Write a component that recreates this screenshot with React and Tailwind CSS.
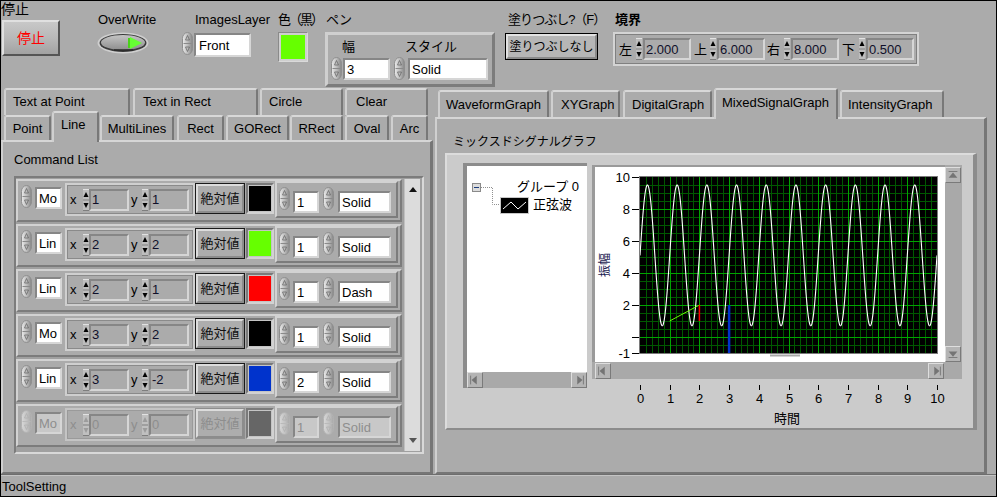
import React from 'react';

const FONT = "font-['Liberation_Sans','Noto_Sans_CJK_JP',sans-serif]";
const SVGFONT = "Liberation Sans, Noto Sans CJK JP, sans-serif";
const SUNK = 'border-2 border-t-[#868686] border-l-[#868686] border-b-[#d6d6d6] border-r-[#d6d6d6]';
const RAISE = 'border-2 border-t-[#d2d2d2] border-l-[#d2d2d2] border-b-[#7c7c7c] border-r-[#7c7c7c]';

function Rocker({ dim }) {
  const id = dim ? 'rkd' : 'rk';
  return (
    <svg width="11" height="23" viewBox="0 0 11 23" className="block shrink-0">
      <defs>
        <linearGradient id={id} x1="0" y1="0" x2="1" y2="0">
          <stop offset="0" stopColor={dim ? '#d8d8d8' : '#ececec'} />
          <stop offset="0.55" stopColor={dim ? '#c2c2c2' : '#b8b8b8'} />
          <stop offset="1" stopColor={dim ? '#a8a8a8' : '#858585'} />
        </linearGradient>
      </defs>
      <rect x="0.5" y="0.5" width="10" height="22" rx="5" ry="6" fill={`url(#${id})`} stroke={dim ? '#b2b2b2' : '#8e8e8e'} />
      <line x1="1.5" y1="11.5" x2="9.5" y2="11.5" stroke={dim ? '#bababa' : '#8a8a8a'} />
      <path d="M5.5 3.5 L3.5 8 L7.5 8 Z" fill="none" stroke={dim ? '#b0b0b0' : '#6a6a6a'} strokeWidth="0.8" />
      <path d="M5.5 19.5 L3.5 15 L7.5 15 Z" fill="none" stroke={dim ? '#b0b0b0' : '#6a6a6a'} strokeWidth="0.8" />
    </svg>
  );
}

function Spin({ dim }) {
  const f = dim ? '#9c9c9c' : '#000';
  return (
    <svg width="6" height="22" viewBox="0 0 6 22" className="block shrink-0">
      <rect x="0" y="0" width="6" height="22" fill={dim ? '#c0c0c0' : '#bdbdbd'} />
      <line x1="0" y1="0.5" x2="6" y2="0.5" stroke="#e2e2e2" />
      <line x1="0" y1="11" x2="6" y2="11" stroke="#7e7e7e" />
      <line x1="0" y1="21.5" x2="6" y2="21.5" stroke="#7e7e7e" />
      <path d="M3 3 L0.5 8 H5.5Z" fill={f} />
      <path d="M3 19 L0.5 14 H5.5Z" fill={f} />
    </svg>
  );
}

function WBox({ cls, dim, children }) {
  return (
    <div className={`${SUNK} ${cls} ${dim ? 'bg-[#c8c8c8] text-[#8e8e8e]' : 'bg-white text-black'} shrink-0 flex items-center pl-[2px] overflow-hidden whitespace-nowrap`}>
      {children}
    </div>
  );
}

function GBox({ cls, dim, children }) {
  return (
    <div className={`${SUNK} ${cls} bg-[#ababab] ${dim ? 'text-[#8e8e8e]' : 'text-[#10102a]'} shrink-0 flex items-center pl-[1px] whitespace-nowrap`}>
      {children}
    </div>
  );
}

function ScrollBtn({ dir }) {
  const paths = {
    up: 'M3 11 L8 5 L13 11 Z',
    down: 'M3 5 L8 11 L13 5 Z',
    left: 'M10 3 L4 8 L10 13 Z',
    right: 'M6 3 L12 8 L6 13 Z',
  };
  const bars = {
    up: 'M3 4 H13',
    down: 'M3 12 H13',
    left: 'M3 3 V13',
    right: 'M13 3 V13',
  };
  return (
    <div className="w-[16px] h-[16px] shrink-0 bg-[#b4b4b4] border border-t-[#dedede] border-l-[#dedede] border-b-[#7a7a7a] border-r-[#7a7a7a] flex items-center justify-center">
      <svg width="14" height="14" viewBox="0 0 16 16" className="block">
        <path d={paths[dir]} fill="#747474" />
        <path d={bars[dir]} stroke="#747474" strokeWidth="1" fill="none" />
      </svg>
    </div>
  );
}

function Toggle() {
  return (
    <svg width="52" height="22" viewBox="0 0 52 22" className="block">
      <defs>
        <linearGradient id="tg" x1="0" y1="0" x2="0" y2="1">
          <stop offset="0" stopColor="#c4c4c4" />
          <stop offset="1" stopColor="#8e8e8e" />
        </linearGradient>
      </defs>
      <ellipse cx="26" cy="11" rx="25.5" ry="10.5" fill="#cfcfcf" />
      <ellipse cx="26" cy="11" rx="23.5" ry="9" fill="#3a3a3a" />
      <ellipse cx="26" cy="10.5" rx="22" ry="7.5" fill="url(#tg)" />
      <line x1="17" y1="18" x2="36" y2="18" stroke="#2a2a2a" strokeWidth="1.5" />
      <rect x="31" y="6" width="2" height="10" fill="#4ad11a" />
      <path d="M33 5 L45 11 L33 17 Z" fill="#66ff33" />
    </svg>
  );
}

function TopBar() {
  return (
    <div className="h-[87px] shrink-0 flex items-start">
      <div className="w-[61px] shrink-0">
        <div className="h-[17px] leading-[17px] text-[14px]">停止</div>
        <div className="mt-[2px] ml-[1px] w-[58px] h-[36px] border-2 border-t-[#e0e0e0] border-l-[#e0e0e0] border-b-[#555555] border-r-[#555555] bg-gradient-to-b from-[#c8c8c8] via-[#b8b8b8] to-[#a2a2a2] flex items-center justify-center text-[#ff0000] text-[14px]">
          停止
        </div>
      </div>
      <div className="ml-[35px] w-[62px] shrink-0 pt-[11px]">
        <div className="h-[16px] leading-[16px] pl-[1px]">OverWrite</div>
        <div className="mt-[4px]">
          <Toggle />
        </div>
      </div>
      <div className="ml-[23px] w-[92px] shrink-0 pt-[11px]">
        <div className="h-[16px] leading-[16px] pl-[13px] whitespace-nowrap">ImagesLayer</div>
        <div className="mt-[4px] flex items-start">
          <Rocker />
          <WBox cls="ml-[1px] mt-[1px] w-[57px] h-[24px] pl-[3px]">Front</WBox>
        </div>
      </div>
      <div className="ml-[4px] w-[46px] shrink-0 pt-[11px]">
        <div className="h-[16px] leading-[16px] tracking-[-2px] whitespace-nowrap">色（黒）</div>
        <div className="mt-[4px] w-[30px] h-[30px] border border-t-[#8a8a8a] border-l-[#8a8a8a] border-b-[#dadada] border-r-[#dadada] bg-[#cfcfcf] p-[2px]">
          <div className="w-full h-full bg-[#66ff00]" />
        </div>
      </div>
      <div className="ml-[1px] w-[170px] shrink-0 pt-[11px]">
        <div className="h-[16px] leading-[16px] pl-[1px]">ペン</div>
        <div className="mt-[4px] w-[170px] h-[55px] border-[3px] border-t-[#cfcfcf] border-l-[#cfcfcf] border-b-[#7c7c7c] border-r-[#7c7c7c]">
          <div className="flex h-[16px] mt-[4px] leading-[16px]">
            <div className="pl-[14px] w-[77px]">幅</div>
            <div>スタイル</div>
          </div>
          <div className="flex items-start mt-[2px]">
            <div className="ml-[3px]">
              <Rocker />
            </div>
            <WBox cls="ml-[1px] mt-[1px] w-[47px] h-[22px]">3</WBox>
            <div className="ml-[4px]">
              <Rocker />
            </div>
            <WBox cls="ml-[3px] mt-[1px] w-[80px] h-[22px]">Solid</WBox>
          </div>
        </div>
      </div>
      <div className="ml-[10px] w-[96px] shrink-0 pt-[11px]">
        <div className="h-[16px] leading-[16px] pl-[3px] whitespace-nowrap tracking-[-1px]">塗りつぶし?（F）</div>
        <div className="mt-[5px] w-[93px] h-[27px] border border-black">
          <div className="w-full h-full border-2 border-t-[#e2e2e2] border-l-[#e2e2e2] border-b-[#8a8a8a] border-r-[#8a8a8a] bg-[#b6b6b6] flex items-center justify-center text-[12px] whitespace-nowrap">
            塗りつぶしなし
          </div>
        </div>
      </div>
      <div className="ml-[12px] w-[306px] shrink-0 pt-[11px]">
        <div className="h-[16px] leading-[16px] pl-[2px] font-bold">境界</div>
        <div className="mt-[4px] w-[306px] h-[34px] border-2 border-[#d4d4d4] shadow-[inset_0_0_0_1px_#808080] flex items-center">
          <div className="ml-[4px] w-[16px]">左</div>
          <div className="ml-[1px]">
            <Spin />
          </div>
          <GBox cls="ml-[1px] w-[48px] h-[22px]">2.000</GBox>
          <div className="ml-[3px] w-[15px]">上</div>
          <div className="ml-[1px]">
            <Spin />
          </div>
          <GBox cls="ml-[1px] w-[48px] h-[22px]">6.000</GBox>
          <div className="ml-[2px] w-[16px]">右</div>
          <div className="ml-[1px]">
            <Spin />
          </div>
          <GBox cls="ml-[1px] w-[48px] h-[22px]">8.000</GBox>
          <div className="ml-[3px] w-[16px]">下</div>
          <div className="ml-[1px]">
            <Spin />
          </div>
          <GBox cls="ml-[1px] w-[48px] h-[22px]">0.500</GBox>
        </div>
      </div>
    </div>
  );
}

const TAB = 'shrink-0 bg-[#ababab] border-t-2 border-l-2 border-r-2 border-t-[#d8d8d8] border-l-[#d0d0d0] border-r-[#787878] rounded-t-[3px] flex items-center whitespace-nowrap';

function CmdRow({ cmd, x, y, color, w, st, dim }) {
  const tc = dim ? 'text-[#8e8e8e]' : 'text-black';
  return (
    <div className={`h-[43px] shrink-0 flex items-start ${RAISE} bg-[#ababab]`}>
      <div className="ml-[3px] mt-[4px]">
        <Rocker dim={dim} />
      </div>
      <WBox cls="ml-[3px] mt-[6px] w-[27px] h-[22px]" dim={dim}>
        {cmd}
      </WBox>
      <div className={`ml-[3px] mt-[2px] w-[130px] h-[33px] shrink-0 border-2 ${dim ? 'border-[#c4c4c4] shadow-[inset_0_0_0_1px_#9a9a9a]' : 'border-[#cfcfcf] shadow-[inset_0_0_0_1px_#8a8a8a]'} flex items-center`}>
        <div className={`w-[13px] pl-[3px] ${tc}`}>x</div>
        <div className="ml-[3px]">
          <Spin dim={dim} />
        </div>
        <GBox cls="w-[40px] h-[22px]" dim={dim}>
          {x}
        </GBox>
        <div className={`w-[13px] pl-[2px] ${tc}`}>y</div>
        <Spin dim={dim} />
        <GBox cls="ml-[1px] w-[40px] h-[22px]" dim={dim}>
          {y}
        </GBox>
      </div>
      <div className={`mt-[2px] w-[50px] h-[31px] shrink-0 border ${dim ? 'border-[#8e8e8e]' : 'border-[#1a1a1a]'}`}>
        <div className={`w-full h-full border-2 border-t-[#dcdcdc] border-l-[#dcdcdc] border-b-[#8c8c8c] border-r-[#8c8c8c] bg-[#adadad] flex items-center justify-center ${dim ? 'text-[#8e8e8e]' : 'text-[#111]'}`}>
          絶対値
        </div>
      </div>
      <div className="ml-[1px] mt-[2px] w-[28px] h-[31px] shrink-0 border-2 border-t-[#7a7a7a] border-l-[#7a7a7a] border-b-[#d2d2d2] border-r-[#d2d2d2] p-[1px] bg-[#c4c4c4]">
        <div className={`w-full h-full ${color}`} />
      </div>
      <div className={`ml-[1px] w-[123px] h-[37px] shrink-0 ${RAISE} flex items-start`}>
        <div className="ml-[2px] mt-[4px]">
          <Rocker dim={dim} />
        </div>
        <WBox cls="ml-[3px] mt-[8px] w-[26px] h-[22px]" dim={dim}>
          {w}
        </WBox>
        <div className="ml-[4px] mt-[4px]">
          <Rocker dim={dim} />
        </div>
        <WBox cls="ml-[4px] mt-[8px] w-[53px] h-[22px]" dim={dim}>
          {st}
        </WBox>
      </div>
    </div>
  );
}

function LeftTab() {
  const rows = [
    { cmd: 'Mo', x: '1', y: '1', color: 'bg-black', w: '1', st: 'Solid' },
    { cmd: 'Lin', x: '2', y: '2', color: 'bg-[#66ff00]', w: '1', st: 'Solid' },
    { cmd: 'Lin', x: '2', y: '1', color: 'bg-[#ff0000]', w: '1', st: 'Dash' },
    { cmd: 'Mo', x: '3', y: '2', color: 'bg-black', w: '1', st: 'Solid' },
    { cmd: 'Lin', x: '3', y: '-2', color: 'bg-[#0033cc]', w: '2', st: 'Solid' },
    { cmd: 'Mo', x: '0', y: '0', color: 'bg-[#666666]', w: '1', st: 'Solid', dim: true },
  ];
  return (
    <div className="w-[432px] shrink-0 flex flex-col">
      <div className="h-[27px] flex items-start pl-[3px] shrink-0">
        <div className={`${TAB} w-[126px] h-[27px] pl-[7px] pb-[2px]`}>Text at Point</div>
        <div className={`${TAB} ml-[3px] w-[125px] h-[27px] pl-[8px] pb-[2px]`}>Text in Rect</div>
        <div className={`${TAB} ml-[2px] w-[83px] h-[27px] pl-[7px] pb-[2px]`}>Circle</div>
        <div className={`${TAB} ml-[2px] w-[83px] h-[27px] pl-[9px] pb-[2px]`}>Clear</div>
      </div>
      <div className="h-[25px] flex items-start pl-[3px] shrink-0">
        <div className={`${TAB} w-[47px] h-[25px] justify-center`}>Point</div>
        <div className={`${TAB} relative z-10 -mt-[4px] ml-[1px] w-[47px] h-[31px] pl-[7px] pb-[6px]`}>Line</div>
        <div className={`${TAB} ml-[1px] w-[74px] h-[25px] justify-center`}>MultiLines</div>
        <div className={`${TAB} ml-[3px] w-[47px] h-[25px] justify-center`}>Rect</div>
        <div className={`${TAB} ml-[2px] w-[63px] h-[25px] justify-center`}>GORect</div>
        <div className={`${TAB} ml-[1px] w-[53px] h-[25px] justify-center`}>RRect</div>
        <div className={`${TAB} ml-[2px] w-[44px] h-[25px] justify-center`}>Oval</div>
        <div className={`${TAB} ml-[2px] w-[37px] h-[25px] justify-center`}>Arc</div>
      </div>
      <div className="flex-1 border-t-2 border-l-2 border-r-[3px] border-b-2 border-t-[#d6d6d6] border-l-[#d0d0d0] border-r-[#767676] border-b-[#767676] flex flex-col">
        <div className="ml-[11px] mt-[10px] h-[15px] leading-[15px]">Command List</div>
        <div className="ml-[11px] mt-[9px] w-[410px] h-[278px] border-2 border-t-[#7c7c7c] border-l-[#7c7c7c] border-b-[#d8d8d8] border-r-[#d8d8d8] bg-[#a0a0a0] flex items-start">
          <div className="w-[386px] pt-[1px] flex flex-col gap-[2px]">
            {rows.map((r, i) => (
              <CmdRow key={i} {...r} />
            ))}
          </div>
          <div className="ml-[2px] mt-[1px] w-[16px] h-[272px] bg-[#dcdcdc] border-l border-[#c0c0c0] flex flex-col items-center justify-between py-[8px]">
            <svg width="8" height="5" viewBox="0 0 8 5" className="block">
              <path d="M4 0 L8 5 H0Z" fill="#111" />
            </svg>
            <svg width="8" height="5" viewBox="0 0 8 5" className="block">
              <path d="M0 0 H8 L4 5Z" fill="#555" />
            </svg>
          </div>
        </div>
      </div>
    </div>
  );
}

function PlotSvg() {
  const ox = 45;
  const oy = 10;
  const W = 297;
  const H = 176;
  const X = (t) => ox + t * 29.7;
  const Y = (v) => oy + (10 - v) * 16;
  const minor = [];
  const major = [];
  for (let i = 1; i < 50; i++) {
    const px = Math.round(X(i / 5)) + 0.5;
    const el = <line key={'v' + i} x1={px} y1={oy} x2={px} y2={oy + H} />;
    if (i % 5 === 0) major.push(el);
    else minor.push(el);
  }
  for (let j = 1; j < 22; j++) {
    const v = -1 + j / 2;
    const py = Math.round(Y(v)) + 0.5;
    const el = <line key={'h' + j} x1={ox} y1={py} x2={ox + W} y2={py} />;
    if (v % 2 === 0) major.push(el);
    else minor.push(el);
  }
  const pts = [];
  for (let k = 0; k <= 2000; k++) {
    const t = k / 200;
    pts.push(`${X(t).toFixed(2)},${Y(5.1 + 4.4 * Math.sin(2 * Math.PI * t)).toFixed(2)}`);
  }
  const ticks = [10, 8, 6, 4, 2, 0, -1];
  return (
    <svg width="350" height="195" viewBox="0 0 350 195" className="block" fontFamily={SVGFONT} fontSize="13">
      <defs>
        <clipPath id="pc">
          <rect x={ox} y={oy} width={W} height={H} />
        </clipPath>
      </defs>
      <rect x={ox} y={oy} width={W} height={H} fill="#000" />
      <g stroke="#005800" strokeWidth="1" shapeRendering="crispEdges">{minor}</g>
      <g stroke="#00a400" strokeWidth="1" shapeRendering="crispEdges">{major}</g>
      <g clipPath="url(#pc)">
        <polyline points={pts.join(' ')} fill="none" stroke="#ffffff" strokeWidth="1.1" />
        <line x1={X(1)} y1={Y(1)} x2={X(2)} y2={Y(2)} stroke="#66ff00" strokeWidth="1" />
        <line x1={X(2)} y1={Y(2)} x2={X(2)} y2={Y(1)} stroke="#ff0000" strokeWidth="1.5" />
        <line x1={X(3)} y1={Y(2)} x2={X(3)} y2={Y(-2)} stroke="#0033cc" strokeWidth="2.5" />
      </g>
      <rect x={ox - 0.5} y={oy - 0.5} width={W + 1} height={H + 1} fill="none" stroke="#7a7a7a" />
      {ticks.map((v) => (
        <g key={v}>
          <line x1="37" y1={Math.round(Y(v)) + 0.5} x2="44" y2={Math.round(Y(v)) + 0.5} stroke="#000" shapeRendering="crispEdges" />
          {v !== 0 && (
            <text x="35" y={Y(v) + 4.5} textAnchor="end" fill="#000">
              {v}
            </text>
          )}
        </g>
      ))}
      <text x="0" y="0" transform="translate(14 98) rotate(-90)" textAnchor="middle" fill="#1a1a50" fontSize="12">
        振幅
      </text>
      <line x1="175" y1="188.5" x2="205" y2="188.5" stroke="#a8a8a8" strokeWidth="2" />
    </svg>
  );
}

function XAxisSvg() {
  const xs = [0, 1, 2, 3, 4, 5, 6, 7, 8, 9, 10];
  return (
    <svg width="370" height="49" viewBox="0 0 370 49" className="block" fontFamily={SVGFONT} fontSize="13">
      {xs.map((i) => {
        const x = Math.round(48 + i * 29.7) + 0.5;
        return (
          <g key={i}>
            <line x1={x} y1="6" x2={x} y2="11" stroke="#000" shapeRendering="crispEdges" />
            <text x={x} y="24" textAnchor="middle" fill="#000">
              {i}
            </text>
          </g>
        );
      })}
      <text x="195" y="44" textAnchor="middle" fill="#000">
        時間
      </text>
    </svg>
  );
}

function Legend() {
  return (
    <div className="mt-[8px] ml-[16px] w-[124px] h-[225px] shrink-0 border-l-4 border-t-[3px] border-[#8c8c8c] bg-white flex flex-col">
      <div className="relative flex-1">
        <svg width="40" height="40" viewBox="0 0 40 40" className="absolute left-[0px] top-[0px]">
          <path d="M14 21.5 H25.5 V38.5 H33" fill="none" stroke="#909090" strokeDasharray="1 1" />
        </svg>
        <div className="absolute left-[5px] top-[17px] w-[9px] h-[9px] border border-[#8a8a8a] bg-[#dcdcdc] flex items-center justify-center">
          <div className="w-[5px] h-[1px] bg-[#1c3c7c]" />
        </div>
        <div className="absolute left-[50px] top-[13px] text-[13px] leading-[15px] whitespace-nowrap">グループ 0</div>
        <div className="absolute left-[33px] top-[31px] w-[29px] h-[17px] border border-[#c8c8c8] bg-black">
          <svg width="27" height="15" viewBox="0 0 27 15" className="block">
            <polyline points="2,11 10,4 17,11 25,4" fill="none" stroke="#fff" strokeWidth="1" />
          </svg>
        </div>
        <div className="absolute left-[66px] top-[31px] text-[13px] leading-[15px] whitespace-nowrap">正弦波</div>
      </div>
      <div className="h-[16px] bg-[#a9a9a9] flex items-center justify-between shrink-0">
        <ScrollBtn dir="left" />
        <ScrollBtn dir="right" />
      </div>
    </div>
  );
}

function RightTab() {
  return (
    <div className="ml-[2px] w-[552px] shrink-0 flex flex-col">
      <div className="h-[29px] flex items-end pl-[3px] shrink-0">
        <div className={`${TAB} w-[111px] h-[27px] pl-[6px]`}>WaveformGraph</div>
        <div className={`${TAB} ml-[2px] w-[69px] h-[27px] pl-[8px]`}>XYGraph</div>
        <div className={`${TAB} ml-[3px] w-[89px] h-[27px] pl-[7px]`}>DigitalGraph</div>
        <div className={`${TAB} relative z-10 -mb-[2px] ml-[2px] w-[124px] h-[31px] pl-[6px] pb-[5px]`}>MixedSignalGraph</div>
        <div className={`${TAB} ml-[2px] w-[104px] h-[27px] pl-[6px]`}>IntensityGraph</div>
      </div>
      <div className="flex-1 border-t-2 border-l-2 border-r-[3px] border-b-2 border-t-[#d6d6d6] border-l-[#d0d0d0] border-r-[#767676] border-b-[#767676] flex flex-col">
        <div className="ml-[16px] mt-[15px] h-[16px] leading-[16px] text-[12px]">ミックスドシグナルグラフ</div>
        <div className="ml-[8px] mt-[3px] w-[532px] h-[277px] bg-[#cbcbcb] border-t-2 border-l-2 border-r-[4px] border-b-2 border-t-[#dcdcdc] border-l-[#dcdcdc] border-r-[#8c8c8c] border-b-[#8c8c8c] flex items-start">
          <Legend />
          <div className="ml-[5px] mt-[10px] w-[370px] shrink-0 flex flex-col">
            <div className="flex">
              <div className="w-[353px] h-[197px] border-l-[3px] border-t-2 border-[#9a9a9a] bg-white">
                <PlotSvg />
              </div>
              <div className="w-[17px] h-[197px] bg-[#a9a9a9] flex flex-col justify-between pt-[2px]">
                <ScrollBtn dir="up" />
                <ScrollBtn dir="down" />
              </div>
            </div>
            <div className="h-[17px] bg-[#a9a9a9] flex items-center">
              <div className="ml-[3px]">
                <ScrollBtn dir="left" />
              </div>
              <div className="flex-1" />
              <ScrollBtn dir="right" />
              <div className="w-[18px]" />
            </div>
            <XAxisSvg />
          </div>
        </div>
      </div>
    </div>
  );
}

export default function App() {
  return (
    <div className={`${FONT} w-[997px] h-[497px] border border-black bg-[#ababab] text-[13px] leading-none text-black flex flex-col overflow-hidden`}>
      <TopBar />
      <div className="h-[386px] flex shrink-0">
        <LeftTab />
        <RightTab />
      </div>
      <div className="flex-1 border-t border-[#6e6e6e] shadow-[inset_0_1px_0_#c4c4c4] pt-[5px] pl-[1px] text-[13px] leading-[14px]">
        ToolSetting
      </div>
    </div>
  );
}
